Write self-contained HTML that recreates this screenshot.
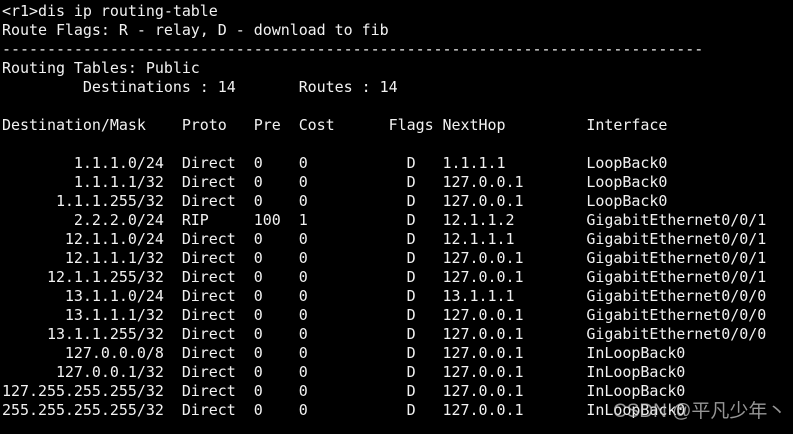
<!DOCTYPE html>
<html><head><meta charset="utf-8"><style>
html,body{margin:0;padding:0;background:#000;width:793px;height:434px;overflow:hidden}
pre{margin:0;padding:2px 0 0 2px;color:#f2f2f2;font-family:"DejaVu Sans Mono","Liberation Mono",monospace;font-size:15px;line-height:19px;letter-spacing:-0.04px}
.wm{position:absolute;left:613px;top:401px;color:rgba(200,200,200,0.75);font-family:"Liberation Sans","Noto Sans CJK SC",sans-serif;font-size:19px;line-height:22px}
</style></head><body>
<pre>&lt;r1&gt;dis ip routing-table
Route Flags: R - relay, D - download to fib
------------------------------------------------------------------------------
Routing Tables: Public
         Destinations : 14       Routes : 14

Destination/Mask    Proto   Pre  Cost      Flags NextHop         Interface

        1.1.1.0/24  Direct  0    0           D   1.1.1.1         LoopBack0
        1.1.1.1/32  Direct  0    0           D   127.0.0.1       LoopBack0
      1.1.1.255/32  Direct  0    0           D   127.0.0.1       LoopBack0
        2.2.2.0/24  RIP     100  1           D   12.1.1.2        GigabitEthernet0/0/1
       12.1.1.0/24  Direct  0    0           D   12.1.1.1        GigabitEthernet0/0/1
       12.1.1.1/32  Direct  0    0           D   127.0.0.1       GigabitEthernet0/0/1
     12.1.1.255/32  Direct  0    0           D   127.0.0.1       GigabitEthernet0/0/1
       13.1.1.0/24  Direct  0    0           D   13.1.1.1        GigabitEthernet0/0/0
       13.1.1.1/32  Direct  0    0           D   127.0.0.1       GigabitEthernet0/0/0
     13.1.1.255/32  Direct  0    0           D   127.0.0.1       GigabitEthernet0/0/0
       127.0.0.0/8  Direct  0    0           D   127.0.0.1       InLoopBack0
      127.0.0.1/32  Direct  0    0           D   127.0.0.1       InLoopBack0
127.255.255.255/32  Direct  0    0           D   127.0.0.1       InLoopBack0
255.255.255.255/32  Direct  0    0           D   127.0.0.1       InLoopBack0</pre>
<div class="wm">CSDN @平凡少年丶</div>
</body></html>
